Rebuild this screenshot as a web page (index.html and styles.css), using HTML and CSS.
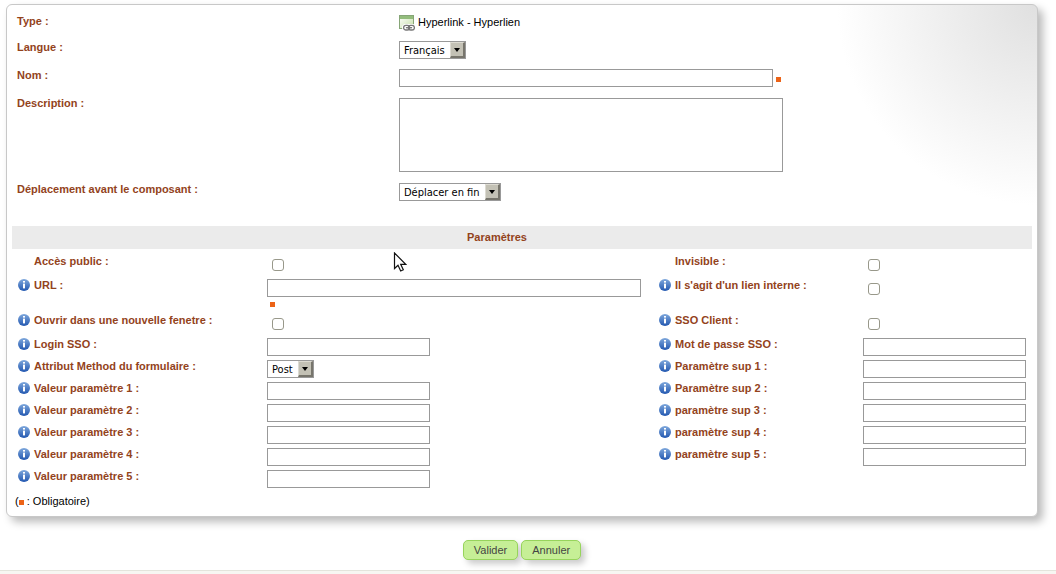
FILE: index.html
```html
<!DOCTYPE html>
<html lang="fr">
<head>
  <meta charset="utf-8">
  <title>Hyperlink - Hyperlien</title>
  <link rel="stylesheet" href="styles.css">
</head>
<body>
  <!-- shared symbols -->
  <svg class="symbols" width="0" height="0" aria-hidden="true">
    <defs>
      <linearGradient id="info-fill" x1="0" y1="0" x2="0" y2="1">
        <stop offset="0" stop-color="#7fa8dc"/>
        <stop offset="1" stop-color="#2257b0"/>
      </linearGradient>
      <linearGradient id="page-fill" x1="0" y1="0" x2="1" y2="1">
        <stop offset="0" stop-color="#ffffff"/>
        <stop offset="1" stop-color="#c5dfa8"/>
      </linearGradient>
    </defs>
    <symbol id="info" viewBox="0 0 12 12">
      <circle cx="6" cy="6" r="6" fill="url(#info-fill)"/>
      <rect x="5" y="2" width="2" height="1.6" fill="#fff"/>
      <rect x="5" y="4.6" width="2" height="4.8" fill="#fff"/>
    </symbol>
  </svg>

  <form class="component-form" action="#" method="post">
    <div class="card">
      <div class="main-fields">
        <div class="field">
          <span class="label">Type :</span>
          <div class="control type">
            <svg width="16" height="16" viewBox="0 0 16 16" aria-hidden="true">
              <rect x=".5" y=".5" width="14" height="13" fill="url(#page-fill)" stroke="#86a577"/>
              <rect x="1" y="1" width="13" height="3" fill="#93bd7c"/>
              <g fill="#eee" stroke="#fff" stroke-width="3">
                <rect x="4.5" y="10.5" width="6" height="4" rx="2"/>
                <rect x="9.5" y="10.5" width="6" height="4" rx="2"/>
              </g>
              <g fill="none" stroke="#777" stroke-width="1.3">
                <rect x="4.6" y="10.4" width="6" height="4.6" rx="2.3"/>
                <rect x="9.4" y="10.4" width="6" height="4.6" rx="2.3"/>
                <path d="M7 12.7h6"/>
              </g>
            </svg>
            <span>Hyperlink - Hyperlien</span>
          </div>
        </div>
        <div class="field">
          <label class="label" for="langue">Langue :</label>
          <div class="control">
            <span class="select"><select id="langue"><option>Français</option></select></span>
          </div>
        </div>
        <div class="field">
          <label class="label" for="nom">Nom :</label>
          <div class="control">
            <input type="text" id="nom" class="text wide" required>
            <span class="required"></span>
          </div>
        </div>
        <div class="field">
          <label class="label" for="description">Description :</label>
          <div class="control"><textarea id="description"></textarea></div>
        </div>
        <div class="field">
          <label class="label" for="position">Déplacement avant le composant :</label>
          <div class="control">
            <span class="select"><select id="position"><option>Déplacer en fin</option></select></span>
          </div>
        </div>
      </div>

      <h2 class="band">Paramètres</h2>

      <div class="params">
        <div class="row tall">
          <label class="name" for="public">Accès public :</label>
          <div class="value"><input type="checkbox" id="public"></div>
          <label class="name" for="invisible">Invisible :</label>
          <div class="value"><input type="checkbox" id="invisible"></div>
        </div>
        <div class="row">
          <label class="name" for="url"><svg class="info"><use href="#info"/></svg>URL :</label>
          <div class="value url">
            <input type="text" id="url" class="text wide" required>
            <span class="required"></span>
          </div>
          <label class="name" for="interne"><svg class="info"><use href="#info"/></svg>Il s'agit d'un lien interne :</label>
          <div class="value"><input type="checkbox" id="interne"></div>
        </div>
        <div class="row tall">
          <label class="name" for="fenetre"><svg class="info"><use href="#info"/></svg>Ouvrir dans une nouvelle fenetre :</label>
          <div class="value"><input type="checkbox" id="fenetre"></div>
          <label class="name" for="sso"><svg class="info"><use href="#info"/></svg>SSO Client :</label>
          <div class="value"><input type="checkbox" id="sso"></div>
        </div>
        <div class="row">
          <label class="name" for="login"><svg class="info"><use href="#info"/></svg>Login SSO :</label>
          <div class="value"><input type="text" id="login" class="text"></div>
          <label class="name" for="passe"><svg class="info"><use href="#info"/></svg>Mot de passe SSO :</label>
          <div class="value"><input type="text" id="passe" class="text"></div>
        </div>
        <div class="row">
          <label class="name" for="method"><svg class="info"><use href="#info"/></svg>Attribut Method du formulaire :</label>
          <div class="value">
            <span class="select"><select id="method"><option>Post</option></select></span>
          </div>
          <label class="name" for="sup1"><svg class="info"><use href="#info"/></svg>Paramètre sup 1 :</label>
          <div class="value"><input type="text" id="sup1" class="text"></div>
        </div>
        <div class="row">
          <label class="name" for="val1"><svg class="info"><use href="#info"/></svg>Valeur paramètre 1 :</label>
          <div class="value"><input type="text" id="val1" class="text"></div>
          <label class="name" for="sup2"><svg class="info"><use href="#info"/></svg>Paramètre sup 2 :</label>
          <div class="value"><input type="text" id="sup2" class="text"></div>
        </div>
        <div class="row">
          <label class="name" for="val2"><svg class="info"><use href="#info"/></svg>Valeur paramètre 2 :</label>
          <div class="value"><input type="text" id="val2" class="text"></div>
          <label class="name" for="sup3"><svg class="info"><use href="#info"/></svg>paramètre sup 3 :</label>
          <div class="value"><input type="text" id="sup3" class="text"></div>
        </div>
        <div class="row">
          <label class="name" for="val3"><svg class="info"><use href="#info"/></svg>Valeur paramètre 3 :</label>
          <div class="value"><input type="text" id="val3" class="text"></div>
          <label class="name" for="sup4"><svg class="info"><use href="#info"/></svg>paramètre sup 4 :</label>
          <div class="value"><input type="text" id="sup4" class="text"></div>
        </div>
        <div class="row">
          <label class="name" for="val4"><svg class="info"><use href="#info"/></svg>Valeur paramètre 4 :</label>
          <div class="value"><input type="text" id="val4" class="text"></div>
          <label class="name" for="sup5"><svg class="info"><use href="#info"/></svg>paramètre sup 5 :</label>
          <div class="value"><input type="text" id="sup5" class="text"></div>
        </div>
        <div class="row">
          <label class="name" for="val5"><svg class="info"><use href="#info"/></svg>Valeur paramètre 5 :</label>
          <div class="value"><input type="text" id="val5" class="text"></div>
        </div>
      </div>

      <p class="legend">(<span class="required"></span> : Obligatoire)</p>
    </div>

    <div class="actions">
      <button type="submit" class="button">Valider</button>
      <button type="button" class="button">Annuler</button>
    </div>
  </form>

  <div class="footer"></div>

  <svg class="cursor" width="14" height="20" viewBox="0 0 14 20" aria-hidden="true">
    <path d="M1.5 1v15.5l3.5-3.3 2.7 5.8 2.6-1.2-2.6-5.5h5z" fill="#fff" stroke="#111" stroke-width="1.2"/>
  </svg>
</body>
</html>
```
FILE: styles.css
```css
*,
*::before,
*::after {
  box-sizing: border-box;
}

body {
  margin: 0;
  padding-top: 4px;
  background: #fff;
  color: #000;
  font-family: "Liberation Sans", Arial, sans-serif;
  font-size: 11px;
  line-height: 14px;
}

.symbols {
  position: absolute;
}

.component-form {
  margin: 0 18px 0 6px;
}

.card {
  padding: 5px;
  border: 1px solid #c8c8c8;
  border-radius: 6px;
  background: #fff radial-gradient(circle 200px at top right, #e0e0e0, #fff);
  box-shadow: 5px 5px 9px #bbb;
}

.label,
.name,
.band {
  color: #93431c;
  font-weight: bold;
}

/* main fields */
.field {
  display: grid;
  grid-template-columns: 382px 1fr;
  align-items: start;
  padding: 4px 0 5px 5px;
}

.control {
  display: flex;
  align-items: center;
  gap: 3px;
  padding-top: 1px;
}

.control .required {
  margin-top: 3px;
}

.type span {
  margin-top: -2px;
}

textarea {
  width: 384px;
  height: 74px;
  margin: 1px 0;
  border: 1px solid #999;
  background: #fff;
  resize: none;
}

.text {
  width: 163px;
  height: 18px;
  padding: 0 3px;
  border: 1px solid #999;
  background: #fff;
}

.wide {
  width: 374px;
}

/* drop-downs */
.select {
  position: relative;
  display: inline-flex;
}

.select select {
  appearance: none;
  height: 18px;
  padding: 0 20px 0 4px;
  border: 1px solid #999;
  border-radius: 0;
  background: #fff;
  color: #000;
  font-family: "DejaVu Sans Condensed", "DejaVu Sans", sans-serif;
  font-size: 11px;
}

.select::before {
  content: "";
  position: absolute;
  top: 1px;
  right: 1px;
  width: 15px;
  height: 16px;
  border: 1px solid;
  border-width: 1px 2px 2px 1px;
  border-color: #dddbd2 #77756c #77756c #dddbd2;
  background: #c3c1b5;
  pointer-events: none;
}

.select::after {
  content: "";
  position: absolute;
  top: 7px;
  right: 6px;
  border: 3px solid transparent;
  border-top: 4px solid #000;
  border-bottom: none;
  pointer-events: none;
}

.required {
  display: inline-block;
  width: 5px;
  height: 5px;
  background: #ec6317;
}

/* parameters */
.band {
  margin: 20px 0 4px;
  padding-right: 50px;
  background: #ebebeb;
  font-size: 11px;
  line-height: 23px;
  text-align: center;
}

.row {
  display: grid;
  grid-template-columns: 255px 1fr 210px 169px;
  align-items: start;
  min-height: 22px;
}

.tall {
  min-height: 24px;
}

.name {
  position: relative;
  padding: 1px 0 0 22px;
}

.info {
  position: absolute;
  top: 2px;
  left: 6px;
  width: 12px;
  height: 12px;
}

.value {
  display: flex;
  padding-top: 2px;
}

.url {
  flex-direction: column;
  gap: 5px;
  padding-bottom: 5px;
}

.url .required {
  margin-left: 3px;
}

input[type="checkbox"] {
  appearance: none;
  width: 12px;
  height: 12px;
  margin: 4px 5px 0;
  border: 1px solid #98988a;
  border-radius: 3px;
  background: #fff;
}

.legend {
  margin: 4px 0 3px 3px;
}

/* buttons */
.actions {
  display: flex;
  justify-content: center;
  gap: 3px;
  margin-top: 23px;
}

.button {
  height: 20px;
  padding: 0 10px;
  border: 1px solid #97d45c;
  border-radius: 5px;
  background: #c6ef96;
  box-shadow: 4px 4px 6px #ccc;
  color: #444;
  font-family: inherit;
  font-size: 11px;
}

.footer {
  height: 4px;
  margin-top: 10px;
  border-top: 1px solid #e4e4dc;
  background: #f7f6f2;
}

.cursor {
  position: absolute;
  top: 252px;
  left: 393px;
}
```
